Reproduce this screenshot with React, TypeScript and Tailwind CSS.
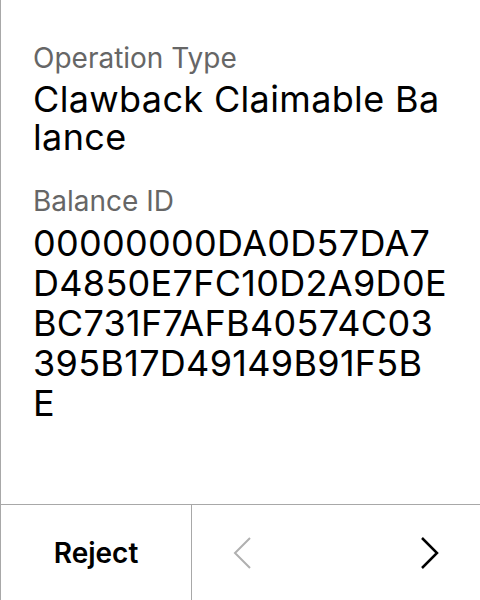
const hexLines = [
  "00000000DA0D57DA7",
  "D4850E7FC10D2A9D0E",
  "BC731F7AFB40574C03",
  "395B17D49149B91F5B",
  "E",
];

export default function App() {
  return (
    <div
      className="w-[480px] h-[600px] flex flex-col bg-white border-l border-[#a8a8a8]"
      style={{ fontFamily: "Inter, 'Noto Sans', sans-serif" }}
    >
      <div className="flex-1 pl-[32px] pr-[34px] pt-[41px] break-all">
        <div className="text-[28px] leading-[34px] text-[#666666]">Operation Type</div>
        <div className="mt-[5px] text-[36px] leading-[38px] tracking-[0.35px] text-black">Clawback Claimable Balance</div>
        <div className="mt-[28px] text-[28px] leading-[34px] text-[#666666]">Balance ID</div>
        <div className="mt-[5px] flex flex-col text-[36px] leading-[40px] tracking-[0.3px] text-black">
          {hexLines.map((l) => (
            <span key={l} className="whitespace-nowrap">{l}</span>
          ))}
        </div>
      </div>
      <div className="h-[96px] flex border-t border-[#a8a8a8]">
        <div className="w-[191px] flex items-center justify-center border-r border-[#a8a8a8] text-[28px] font-semibold text-black">
          Reject
        </div>
        <div className="flex-1 flex items-center justify-between px-[41px]">
          <svg width="18" height="32" viewBox="0 0 18 32" fill="none">
            <path d="M17 1 L2 16 L17 31" stroke="#b0b0b0" strokeWidth="2" />
          </svg>
          <svg width="18" height="32" viewBox="0 0 18 32" fill="none">
            <path d="M1 1 L16 16 L1 31" stroke="#000000" strokeWidth="2.5" />
          </svg>
        </div>
      </div>
    </div>
  );
}
